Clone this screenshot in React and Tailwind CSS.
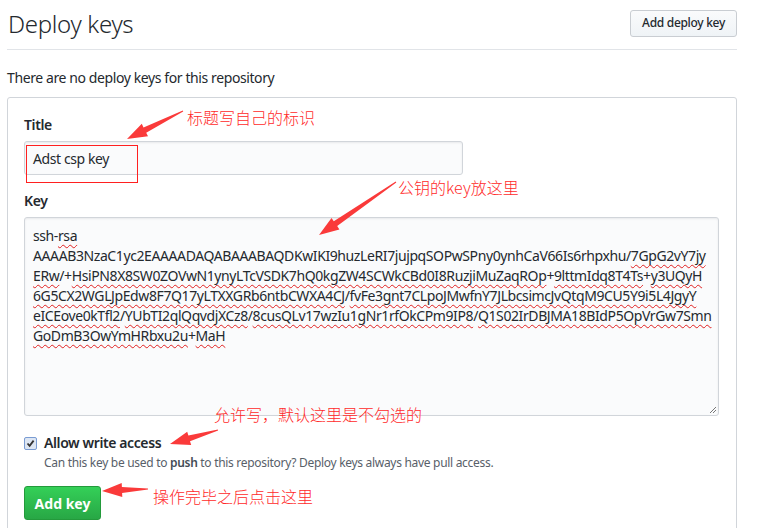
import React from 'react';

const keyLines = [
    [['ssh-', false], ['rsa', true]],
    [['AAAAB3NzaC1yc2EAAAADAQABAAABAQDKwIKI9huzLeRI7jujpqSOPwSPny0ynhCaV66Is6rhpxhu/', false], ['7GpG2vY7jy', true]],
    [['ERw', true], ['/+', false], ['HsiPN8X8SW0ZOVwN1ynyLTcVSDK7hQ0kgZW4SCWkCBd0I8RuzjiMuZaqROp', true], ['+', false], ['9lttmIdq8T4Ts', true], ['+', false], ['y3UQyH', true]],
    [['6G5CX2WGLJpEdw8F7Q17yLTXXGRb6ntbCWXA4CJ', true], ['/', false], ['fvFe3gnt7CLpoJMwfnY7JLbcsimcJvQtqM9CU5Y9i5L4JgyY', true]],
    [['eICEove0kTfl2', true], ['/', false], ['YUbTI2qlQqvdjXCz8', true], ['/', false], ['8cusQLv17wzIu1gNr1rfOkCPm9IP8', true], ['/', false], ['Q1S02IrDBJMA18BIdP5OpVrGw7Smn', true]],
    [['GoDmB3OwYmHRbxu2u', true], ['+', false], ['MaH', true]],
];

// tapered red arrow, tail -> tip
const arrowPoints = (tx, ty, hx, hy) => {
    const dx = hx - tx;
    const dy = hy - ty;
    const len = Math.sqrt(dx * dx + dy * dy);
    const ux = dx / len;
    const uy = dy / len;
    const nx = -uy;
    const ny = ux;
    const headLen = 20;
    const bx = hx - ux * headLen;
    const by = hy - uy * headLen;
    const pts = [
        [tx + nx * 0.5, ty + ny * 0.5],
        [bx + nx * 3, by + ny * 3],
        [bx + nx * 7, by + ny * 7],
        [hx, hy],
        [bx - nx * 7, by - ny * 7],
        [bx - nx * 3, by - ny * 3],
        [tx - nx * 0.5, ty - ny * 0.5],
    ];
    return pts.map((p) => p[0].toFixed(1) + ',' + p[1].toFixed(1)).join(' ');
};

const arrows = [
    [183, 111, 127, 139],
    [396, 182, 319, 235],
    [218, 430, 170, 444],
    [148, 489, 102, 491],
];

const notes = [
    { text: '标题写自己的标识', left: 187, top: 106 },
    { text: '公钥的key放这里', left: 398, top: 176 },
    { text: '允许写，默认这里是不勾选的', left: 214, top: 403 },
    { text: '操作完毕之后点击这里', left: 153, top: 485 },
];

export default function App() {
    return (
        <div
            className="relative w-[765px] h-[528px] overflow-hidden bg-white text-[#24292e]"
            style={{ fontFamily: '"Noto Sans", "Noto Sans CJK SC", sans-serif' }}
        >
            <div className="ml-[7px] w-[730px]">
                <div className="flex items-center justify-between h-[50px] border-b border-[#e1e4e8] pb-[1px]">
                    <h2 className="text-[24px] font-light leading-none pl-[1px] tracking-[-0.3px]">Deploy keys</h2>
                    <button className="h-[27px] px-[11px] mt-[-2px] text-[12px] font-medium tracking-[-0.3px] text-[#24292e] border border-[#c9cdd2] rounded-[3px] bg-gradient-to-b from-[#fafbfc] to-[#eff3f6]">
                        Add deploy key
                    </button>
                </div>

                <p className="text-[14px] tracking-[-0.4px] mt-[17px] h-[30px]">There are no deploy keys for this repository</p>

                <div className="border border-[#d1d5da] rounded-[3px] px-[16px] pt-[16px] h-[460px] tracking-[-0.4px]">
                    <label className="block text-[14px] font-semibold leading-[20px] mt-[1px]">Title</label>
                    <div className="mt-[6px] w-[439px] h-[34px] border border-[#d1d5da] rounded-[3px] bg-[#fafbfc] px-[8px] flex items-center text-[14px] shadow-[inset_0_1px_2px_rgba(27,31,35,0.075)]">
                        Adst csp key
                    </div>

                    <label className="block text-[14px] font-semibold leading-[20px] mt-[16px]">Key</label>
                    <div className="relative mt-[6px] w-[695px] h-[199px] border border-[#d1d5da] rounded-[3px] bg-[#fafbfc] px-[8px] pt-[8px] text-[14px] leading-[20px] shadow-[inset_0_1px_2px_rgba(27,31,35,0.075)]">
                        {keyLines.map((line, i) => (
                            <div key={i} className="whitespace-nowrap">
                                {line.map(([t, bad], j) => (
                                    <span
                                        key={j}
                                        className={bad ? 'underline decoration-wavy decoration-[#e02020] decoration-[1px] underline-offset-[3px]' : ''}
                                    >
                                        {t}
                                    </span>
                                ))}
                            </div>
                        ))}
                        <svg className="absolute right-[1px] bottom-[1px]" width="9" height="9" viewBox="0 0 9 9">
                            <path d="M8 2 L2 8 M8 5 L5 8" stroke="#777" strokeWidth="1" />
                        </svg>
                    </div>

                    <div className="flex items-center mt-[17px]">
                        <span className="w-[13px] h-[13px] border border-[#7a9cd3] rounded-[2px] bg-[#dde6f3] flex items-center justify-center">
                            <svg width="9" height="9" viewBox="0 0 9 9">
                                <path d="M1.5 4.5 L3.6 6.8 L7.6 1.6" stroke="#333" strokeWidth="1.8" fill="none" />
                            </svg>
                        </span>
                        <span className="ml-[7px] text-[14px] font-semibold leading-[20px]">Allow write access</span>
                    </div>
                    <p className="ml-[20px] text-[12px] tracking-[-0.3px] text-[#586069] leading-[18px] mt-[1px]">
                        Can this key be used to <b className="font-semibold text-[#444d56]">push</b> to this repository? Deploy keys always have pull access.
                    </p>

                    <button className="mt-[14px] w-[77px] h-[34px] rounded-[3px] border border-[#239a3b] bg-gradient-to-b from-[#34d058] to-[#28a745] text-white text-[14px] font-bold tracking-normal">
                        Add key
                    </button>
                </div>
            </div>

            {/* annotations */}
            <div className="absolute left-[26px] top-[145px] w-[112px] h-[38px] border border-[#ff2020]" />
            <svg className="absolute left-0 top-0" width="765" height="528">
                {arrows.map((a, i) => (
                    <polygon key={i} points={arrowPoints(a[0], a[1], a[2], a[3])} fill="#fa3a3a" />
                ))}
            </svg>
            {notes.map((n, i) => (
                <div
                    key={i}
                    className="absolute text-[16px] leading-[22px] text-[#ff2a2a] whitespace-nowrap font-light"
                    style={{ left: n.left, top: n.top, fontFamily: '"Noto Sans CJK SC", sans-serif' }}
                >
                    {n.text}
                </div>
            ))}
        </div>
    );
}
